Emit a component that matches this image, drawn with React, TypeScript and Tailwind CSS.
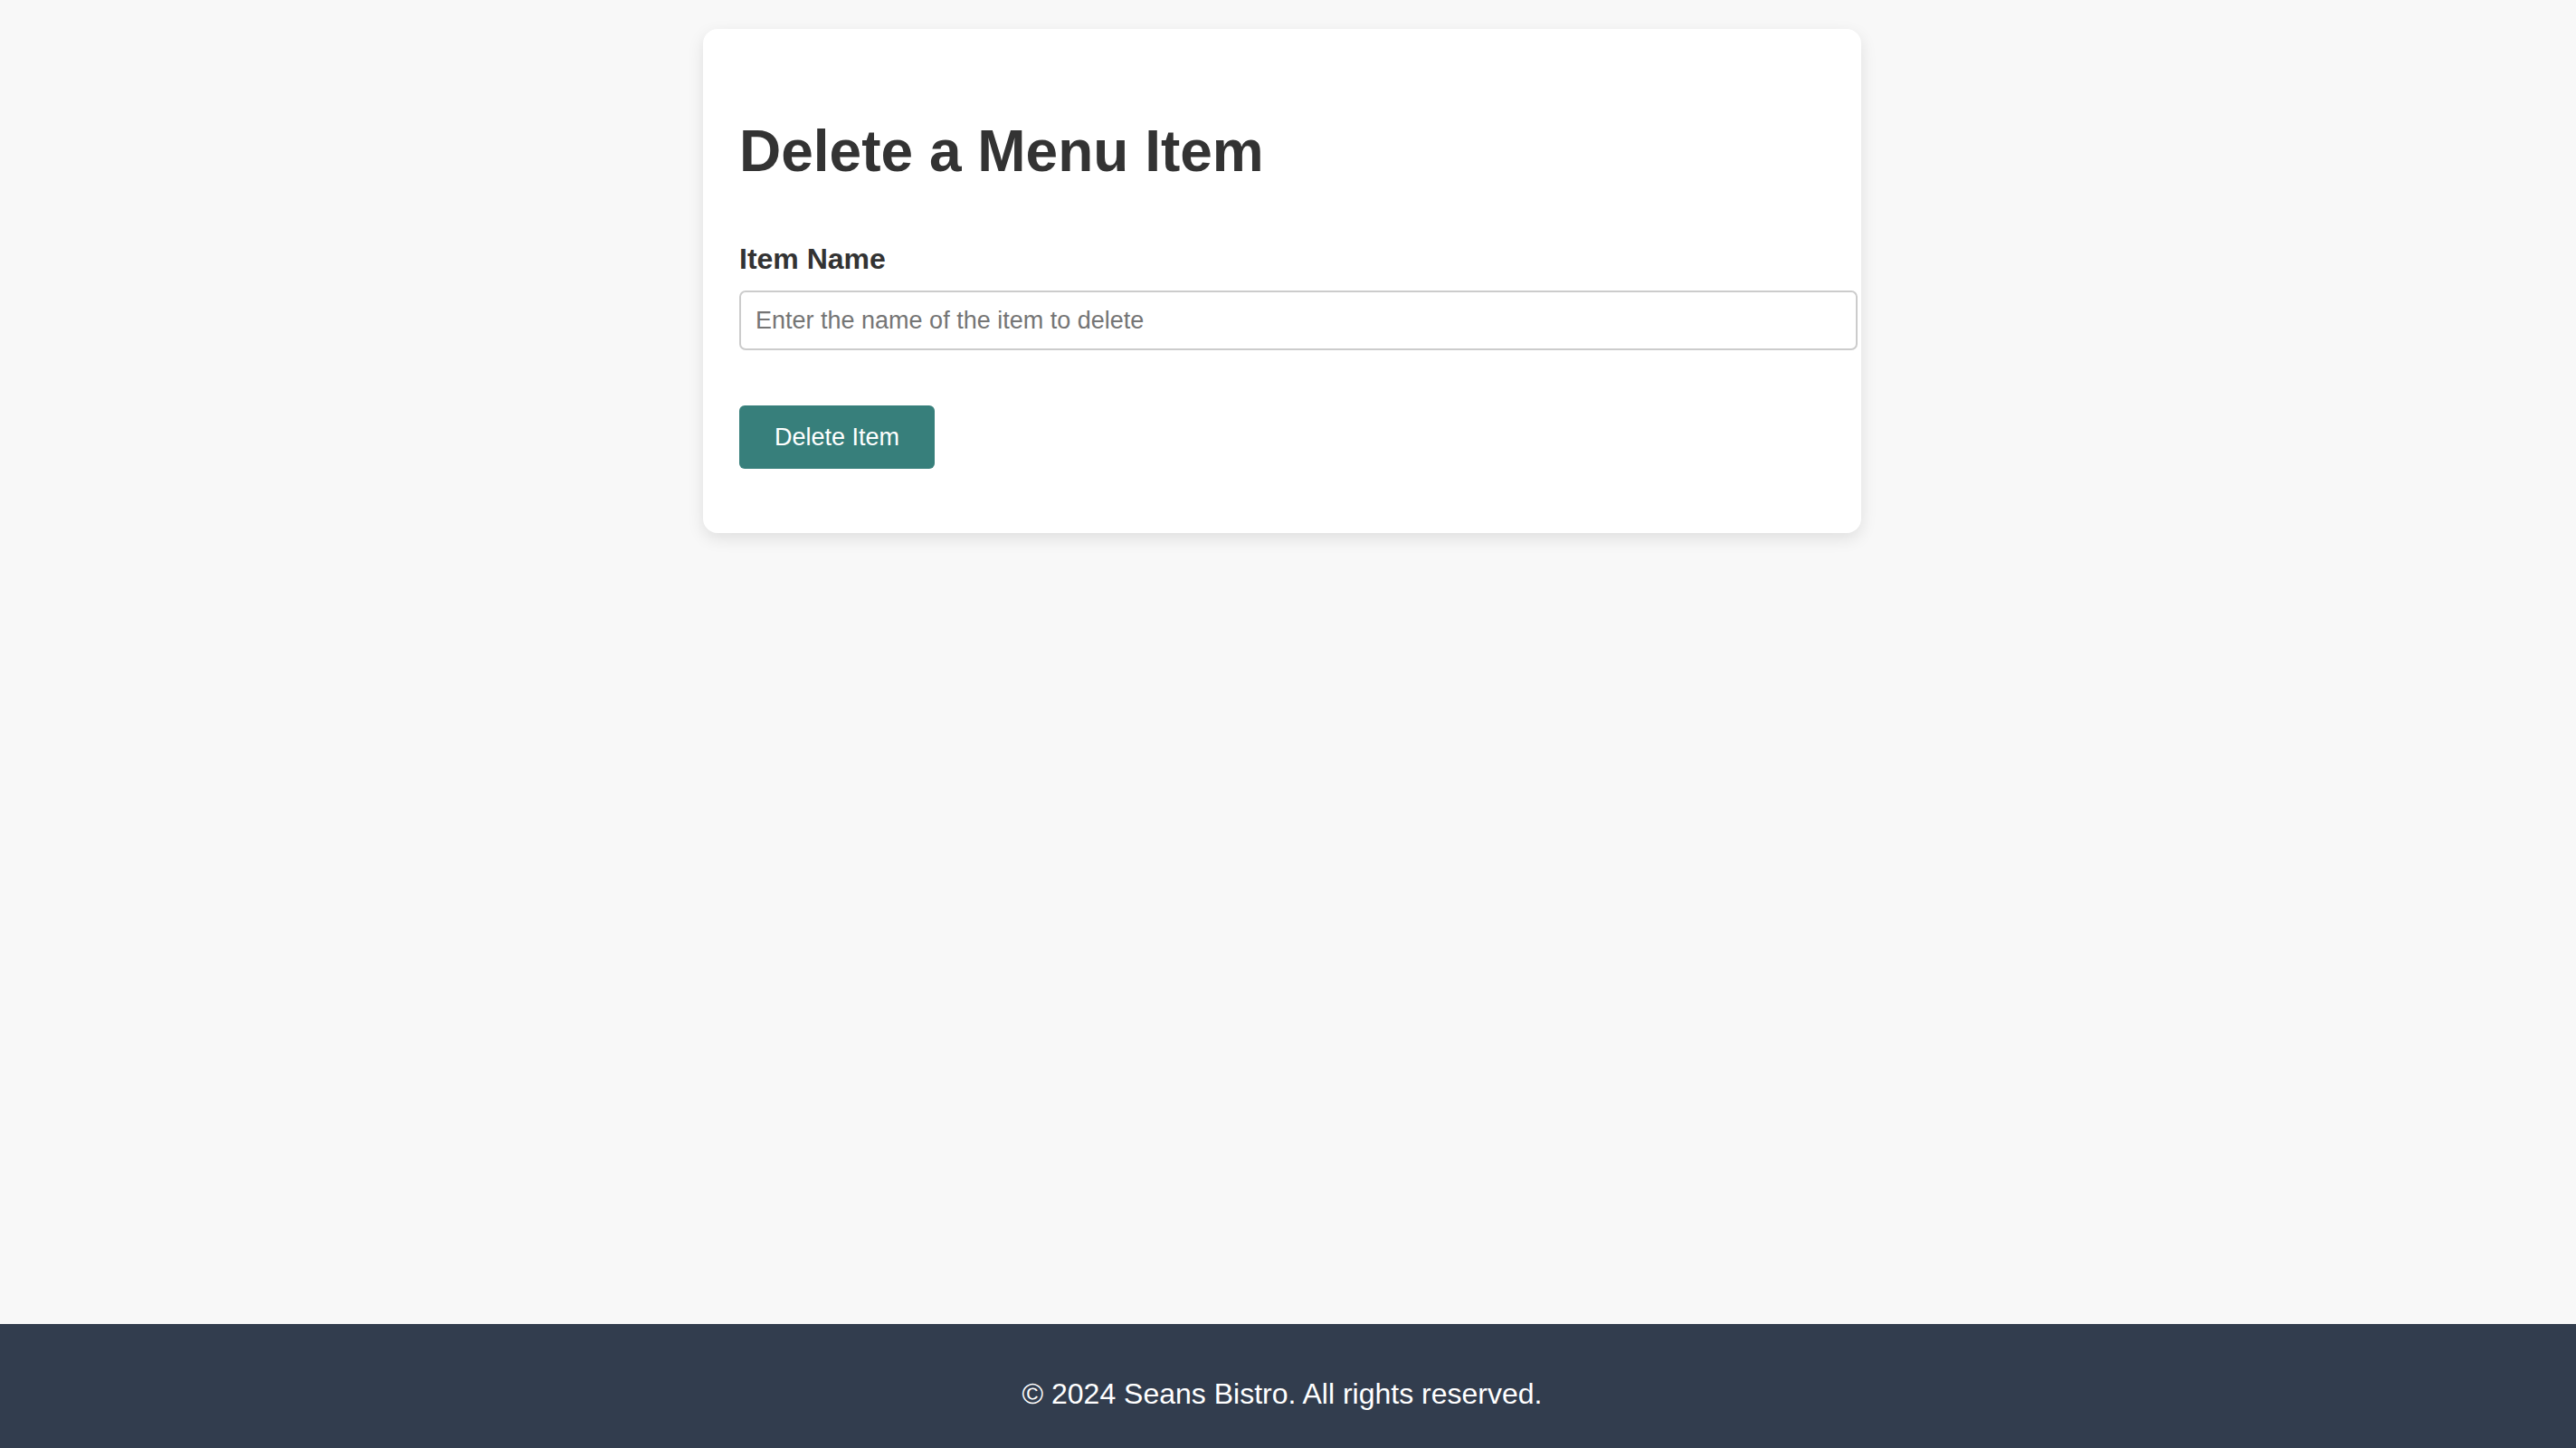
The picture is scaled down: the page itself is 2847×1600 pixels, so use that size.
import { useState } from "react"

export default function App() {
  const [itemName, setItemName] = useState("")

  const handleSubmit = (e: React.FormEvent) => {
    e.preventDefault()
    setItemName("")
  }

  return (
    <div className="min-h-screen bg-[#f8f8f8] font-['Liberation_Sans',Arial,sans-serif] text-[#333333]">
      <main className="h-[1463px] pt-[32px] pr-[13px]">
        <div className="mx-auto w-[1280px] rounded-2xl bg-white px-10 pt-[98px] pb-[71px] shadow-[0_6px_18px_rgba(0,0,0,0.1)]">
          <h1 className="text-[64px] font-bold leading-[74px]">Delete a Menu Item</h1>

          <form onSubmit={handleSubmit}>
            <label htmlFor="itemName" className="mt-[64px] block text-[32px] font-bold leading-[37px]">
              Item Name
            </label>
            <input
              id="itemName"
              type="text"
              value={itemName}
              onChange={(e) => setItemName(e.target.value)}
              placeholder="Enter the name of the item to delete"
              className="mt-[16px] block h-[66px] w-[1236px] rounded-[7px] border-2 border-[#cccccc] bg-white pl-[16px] text-[27px] text-[#333333] outline-none placeholder:text-[#757575]"
            />
            <button
              type="submit"
              className="mt-[61px] h-[70px] rounded-[6px] bg-[#377f7b] px-[39px] text-[27px] text-white"
            >
              Delete Item
            </button>
          </form>
        </div>
      </main>

      <footer className="h-[137px] bg-[#323d4e] pt-[59px] pr-[13px] text-center text-[32px] leading-[37px] text-white">
        © 2024 Seans Bistro. All rights reserved.
      </footer>
    </div>
  )
}
